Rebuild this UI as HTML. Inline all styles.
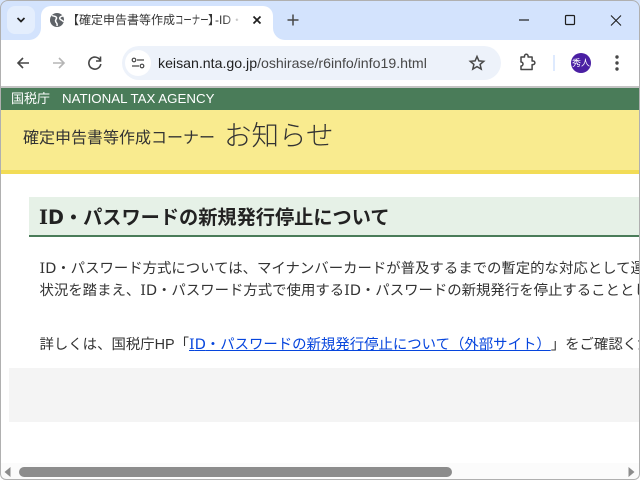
<!DOCTYPE html>
<html lang="ja"><head><meta charset="utf-8"><title>ID・パスワードの新規発行停止について</title>
<style>
html,body{margin:0;padding:0;background:#fff;overflow:hidden}
*{text-spacing-trim:space-all}
#w{position:relative;width:640px;height:480px;overflow:hidden;background:#fff;font-family:"Liberation Sans","Noto Sans CJK JP",sans-serif}
.a{position:absolute;white-space:nowrap}
svg.a{overflow:visible}
.t{color:#333;font-size:14.4px;line-height:20px;left:39.5px}
.m{font-family:"DejaVu Sans",sans-serif}
.m b{font-family:"DejaVu Serif",serif;font-weight:inherit}
</style></head><body><div id="w">
<!-- chrome -->
<div class="a" style="left:0;top:0;width:640px;height:40px;background:#d3e3fd"></div>
<div class="a" style="left:7px;top:6px;width:28px;height:28px;border-radius:8px;background:#e4eefd"></div>
<svg class="a" style="left:0;top:0" width="640" height="90" fill="none">
<path d="M17.500 18l3.500 3.500 3.500-3.500" stroke="#1f1f1f" stroke-width="1.700"/>
<path d="M0 46a6 6 0 0 1 6-6h23a12 12 0 0 0 12-12V16a10 10 0 0 1 10-10h212a10 10 0 0 1 10 10v12a12 12 0 0 0 12 12h355v50H0z" fill="#fff"/>
<circle cx="57" cy="20" r="7" fill="#5f6368"/>
<path d="M52 15.500c2 1 4 .5 4.500 2s-1.500 2-.8 4 2 1.500 1.300 4.500M63 16c-2 0-4 1.500-3 3s3 1 3.500 3" stroke="#fff" stroke-width="1.500"/>
<path d="M253.500 16.500l7 7M260.500 16.500l-7 7" stroke="#1f1f1f" stroke-width="1.700"/>
<path d="M293 14.500v11M287.500 20h11" stroke="#474747" stroke-width="1.500"/>
<path d="M519 20h10" stroke="#1f1f1f" stroke-width="1.200"/>
<rect x="565.500" y="15.500" width="9" height="9" rx="1" stroke="#1f1f1f" stroke-width="1.200"/>
<path d="M611 15.500l10 10M621 15.500l-10 10" stroke="#1f1f1f" stroke-width="1.100"/>
<path d="M29 63h-11M23 58l-5 5 5 5" stroke="#474747" stroke-width="1.600"/>
<path d="M53 63h11M59 58l5 5-5 5" stroke="#b5b5b5" stroke-width="1.600"/>
<path d="M100 60a6 6 0 1 0 .8 4M100.500 56.500v4.500h-4.500" stroke="#474747" stroke-width="1.600"/>
<rect x="122" y="46" width="379" height="34" rx="17" fill="#edf2fa"/>
<circle cx="138" cy="63" r="13" fill="#fff"/>
<circle cx="134" cy="60" r="1.800" stroke="#474747" stroke-width="1.200"/><path d="M137 60h7M132 66h7" stroke="#474747" stroke-width="1.300"/><circle cx="142" cy="66" r="1.800" stroke="#474747" stroke-width="1.200"/>
<path d="M477 56.500l1.900 4.400 4.800.4-3.600 3.100 1.100 4.700-4.200-2.500-4.200 2.500 1.100-4.700-3.600-3.100 4.800-.4z" stroke="#474747" stroke-width="1.500"/>
<path d="M521 57h3.500v-1a1.800 1.800 0 0 1 3.600 0v1h4v4h1a1.800 1.800 0 0 1 0 3.600h-1v4.900h-11.100v-3.500a2 2 0 0 0 0-4V57z" stroke="#474747" stroke-width="1.500" stroke-linejoin="round"/>
<path d="M554 55v16" stroke="#d3e3fd" stroke-width="1.500"/>
<circle cx="581" cy="63" r="10" fill="#4a1fa3"/>
<circle cx="617" cy="57" r="1.700" fill="#474747"/><circle cx="617" cy="63" r="1.700" fill="#474747"/><circle cx="617" cy="69" r="1.700" fill="#474747"/>
</svg>
<div class="a" style="left:72px;top:12px;width:168px;height:16px;overflow:hidden;font-size:12px;line-height:16px;color:#333"><span style="margin-left:-5px">【</span>確定申告書等作成<span style="position:absolute;left:103px;top:0;transform-origin:0 0;transform:scaleX(.7)">コーナー</span><span style="position:absolute;left:136px;top:0">】</span><span style="position:absolute;left:143px;top:0">-ID・/パスワード</span></div>
<div class="a" style="left:225px;top:10px;width:16px;height:20px;background:linear-gradient(90deg,rgba(255,255,255,0),#fff)"></div>
<div class="a" style="left:158px;top:54px;font-size:14.150px;line-height:18px;color:#1f1f1f">keisan.nta.go.jp<span style="color:#474747">/oshirase/r6info/info19.html</span></div>
<div class="a" style="left:571px;top:56px;width:20px;text-align:center;font-size:9px;line-height:14px;color:#fff">秀人</div>
<!-- page -->
<div class="a" style="left:0;top:86px;width:640px;height:2px;background:#c4c4c4"></div>
<div class="a" style="left:1px;top:88px;width:639px;height:22px;background:#4a7c59"></div>
<div class="a" style="left:11px;top:90px;font-size:13px;line-height:18px;color:#fff">国税庁<span style="position:absolute;left:51px;top:0;font-size:13.300px">NATIONAL TAX AGENCY</span></div>
<div class="a" style="left:1px;top:110px;width:639px;height:60px;background:#f9eb8f"></div>
<div class="a" style="left:1px;top:170px;width:639px;height:4px;background:#f2dc56"></div>
<div class="a" style="left:23px;top:128px;font-size:16px;line-height:22px;color:#333">確定申告書等作成コーナー</div>
<div class="a" style="left:224px;top:118px;font-size:27.500px;line-height:36px;font-weight:300;color:#333">お知らせ</div>
<div class="a" style="left:29px;top:197px;width:611px;height:38px;background:#e6f1e7;border-bottom:2px solid #4a7c59"></div>
<div class="a" style="left:39px;top:206px;font-size:19.200px;line-height:24px;font-weight:700;color:#222"><span class="m"><b>I</b>D</span>・パスワードの新規発行停止について</div>
<div class="a t" style="top:259px"><span class="m"><b>I</b>D</span>・パスワード方式については、マイナンバーカードが普及するまでの暫定的な対応として運用してきました</div>
<div class="a t" style="top:281px">状況を踏まえ、<span class="m"><b>I</b>D</span>・パスワード方式で使用する<span class="m"><b>I</b>D</span>・パスワードの新規発行を停止することとしました。</div>
<div class="a t" style="top:335px">詳しくは、国税庁HP「<span style="color:#0645dd;text-decoration:underline"><span class="m"><b>I</b>D</span>・パスワードの新規発行停止について（外部サイト）</span>」をご確認ください。</div>
<div class="a" style="left:9px;top:368px;width:631px;height:54px;background:#f4f4f4"></div>
<!-- scrollbar -->
<div class="a" style="left:1px;top:463px;width:638px;height:16px;background:#fbfbfb"></div>
<div class="a" style="left:19px;top:467px;width:433px;height:10px;border-radius:5px;background:#8c8c8c"></div>
<svg class="a" style="left:0;top:0" width="640" height="480"><path d="M4.500 472l6-5v10zM628.500 467l6 5-6 5z" fill="#8c8c8c"/></svg>
<!-- window edge -->
<div class="a" style="left:0;top:0;width:638px;height:478px;border:1px solid #b0b0b0;border-radius:8px 8px 6px 6px"></div>
</div></body></html>
